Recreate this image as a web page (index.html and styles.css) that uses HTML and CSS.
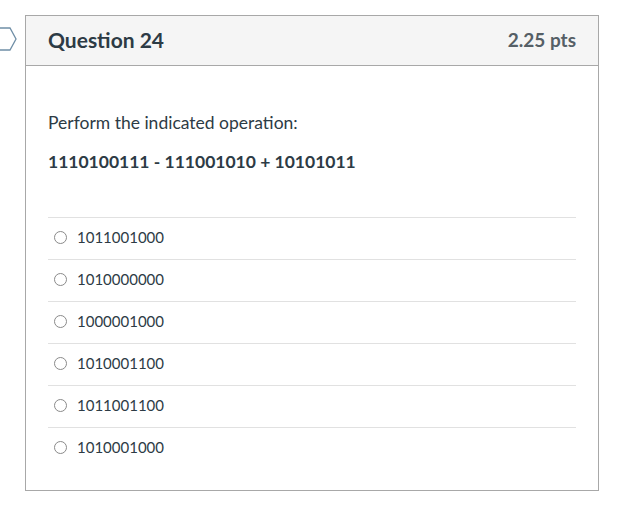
FILE: index.html
```html
<!DOCTYPE html>
<html>
<head>
<meta charset="utf-8">
<link rel="stylesheet" href="styles.css">
</head>
<body>
<div class="page">
  <svg class="flag" width="20" height="26" viewBox="0 0 20 26"><path d="M-4 1 H10 L16 12 L10 23 H-4 Z" fill="#fff" stroke="#6f8ea6" stroke-width="1.3"/></svg>
  <div class="card">
    <div class="header">
      <span class="title">Question 24</span>
      <span class="pts">2.25 pts</span>
    </div>
    <div class="body">
      <p class="prompt">Perform the indicated operation:</p>
      <p class="eq">1110100111 - 111001010 + 10101011</p>
      <div class="answers">
        <label class="answer"><span class="radio"></span><span>1011001000</span></label>
        <label class="answer"><span class="radio"></span><span>1010000000</span></label>
        <label class="answer"><span class="radio"></span><span>1000001000</span></label>
        <label class="answer"><span class="radio"></span><span>1010001100</span></label>
        <label class="answer"><span class="radio"></span><span>1011001100</span></label>
        <label class="answer"><span class="radio"></span><span>1010001000</span></label>
      </div>
    </div>
  </div>
</div>
</body>
</html>
```
FILE: styles.css
```css
html, body { margin: 0; padding: 0; background: #fff; }
body { font-family: Lato, "Open Sans", sans-serif; color: #2d3b45; }
.page { position: relative; padding: 15px 0 0 25px; }
.flag { position: absolute; left: 0; top: 27px; }
.card {
  width: 572px;
  border: 1px solid #a8a8a8;
  background: #fff;
}
.header {
  height: 49px;
  background: #f5f5f5;
  border-bottom: 1px solid #a8a8a8;
  display: flex;
  align-items: center;
  justify-content: space-between;
  padding: 0 22px;
  padding-bottom: 2px;
  box-sizing: border-box;
  height: 50px;
}
.title { font-size: 21px; font-weight: 700; color: #2d3b45; }
.pts { font-size: 19px; font-weight: 700; color: #555f66; }
.body { padding: 46px 22px 21px 22px; }
.prompt { margin: 0; font-size: 17.5px; line-height: 22px; color: #2d3b45; }
.eq { margin: 17px 0 0 0; font-size: 17.5px; font-weight: 700; line-height: 22px; color: #2d3b45; }
.answers { margin-top: 44px; }
.answer {
  display: flex;
  align-items: center;
  height: 41px;
  padding-bottom: 3px;
  box-sizing: border-box;
  height: 42px;
  border-top: 1px solid #e1e1e1;
  font-size: 15px;
  color: #2d3b45;
}
.radio {
  width: 11px;
  height: 11px;
  border: 1px solid #8a8a8a;
  border-radius: 50%;
  margin: 0 10px 0 6px;
  box-sizing: content-box;
}
```
